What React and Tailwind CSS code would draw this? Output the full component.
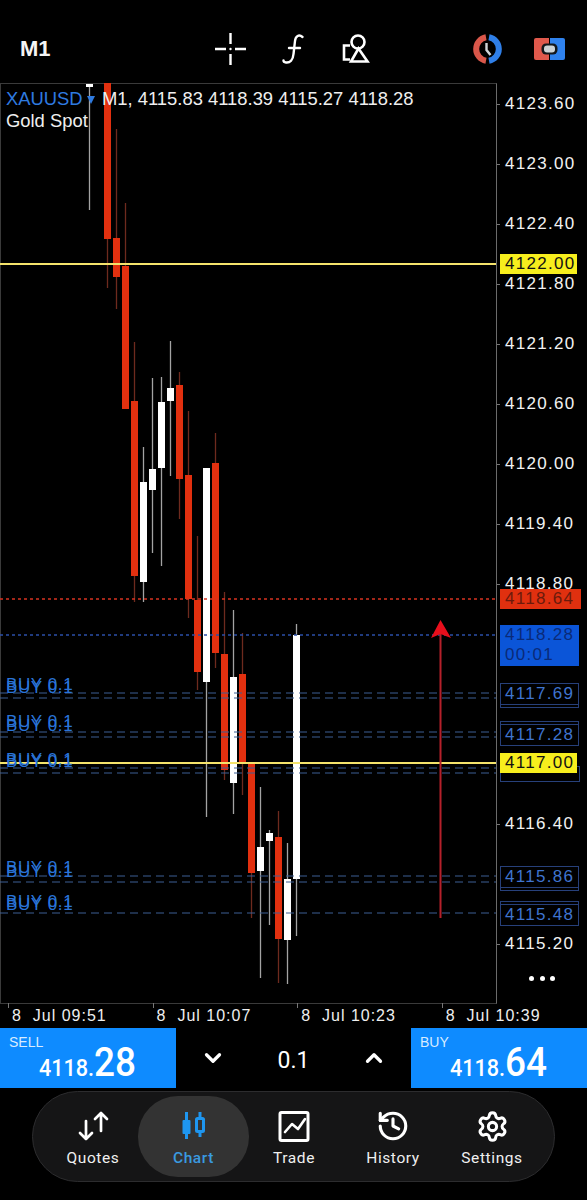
import React from 'react';
import { ChevronDown, ChevronUp, History, Settings } from 'lucide-react';

const sans = "font-['Liberation_Sans',Arial,sans-serif]";
const ui = "font-['Roboto','Liberation_Sans',sans-serif]";

// x = left of body, top/bottom = body, hi/lo = wick
const candles = [
  { x: 86, top: 84, bottom: 87, hi: 84, lo: 210, up: true },
  { x: 104, top: 83, bottom: 239, hi: 83, lo: 288 },
  { x: 113, top: 238, bottom: 277, hi: 129, lo: 309 },
  { x: 122, top: 266, bottom: 409, hi: 203, lo: 409 },
  { x: 131, top: 401, bottom: 576, hi: 342, lo: 602 },
  { x: 140, top: 482, bottom: 582, hi: 447, lo: 602, up: true },
  { x: 149, top: 469, bottom: 490, hi: 378, lo: 553, up: true },
  { x: 158, top: 402, bottom: 468, hi: 377, lo: 566, up: true },
  { x: 167, top: 388, bottom: 401, hi: 341, lo: 476, up: true },
  { x: 176, top: 385, bottom: 479, hi: 372, lo: 519 },
  { x: 185, top: 475, bottom: 599, hi: 411, lo: 618 },
  { x: 194, top: 600, bottom: 672, hi: 536, lo: 690 },
  { x: 203, top: 468, bottom: 682, hi: 468, lo: 817, up: true },
  { x: 212, top: 463, bottom: 653, hi: 433, lo: 668 },
  { x: 221, top: 654, bottom: 770, hi: 592, lo: 780 },
  { x: 230, top: 677, bottom: 783, hi: 610, lo: 814, up: true },
  { x: 239, top: 674, bottom: 763, hi: 633, lo: 795 },
  { x: 248, top: 763, bottom: 873, hi: 763, lo: 918 },
  { x: 257, top: 847, bottom: 871, hi: 787, lo: 978, up: true },
  { x: 266, top: 833, bottom: 841, hi: 830, lo: 925, up: true },
  { x: 275, top: 837, bottom: 939, hi: 811, lo: 983 },
  { x: 284, top: 879, bottom: 940, hi: 843, lo: 984, up: true },
  { x: 293, top: 635, bottom: 879, hi: 624, lo: 936, up: true },
];

const axisPrices = [
  ['4123.60', 103], ['4123.00', 163], ['4122.40', 223], ['4121.80', 283],
  ['4121.20', 343], ['4120.60', 403], ['4120.00', 463], ['4119.40', 523],
  ['4118.80', 583], ['4116.40', 823], ['4115.20', 943],
];

const buyLines = [693, 698, 732, 737, 768, 773, 876, 882, 913];
const buyLabels = [684, 687, 721, 725, 759, 761, 867, 871, 901, 904];

const orderBoxes = [
  { price: '4117.69', top: 683, shadow: 3 },
  { price: '4117.28', top: 724, shadow: -3 },
  { price: '4115.86', top: 866, shadow: 3 },
  { price: '4115.48', top: 904, shadow: -3 },
];

const timeLabels = ['8  Jul 09:51', '8  Jul 10:07', '8  Jul 10:23', '8  Jul 10:39'];

function ChartCanvas() {
  return (
    <svg className="absolute left-0 top-0" width="497" height="921" viewBox="0 83 497 921">
      {candles.map((c) => (
        <g key={c.x}>
          <line x1={c.x + 3.5} x2={c.x + 3.5} y1={c.hi} y2={c.lo} stroke={c.up ? '#a3a3a3' : '#6e2a1e'} strokeWidth="1.3" />
          <rect x={c.x} y={c.top} width="7" height={c.bottom - c.top} fill={c.up ? '#ffffff' : '#e2300f'} />
        </g>
      ))}
      {buyLines.map((y) => (
        <line key={y} x1="0" x2="496" y1={y} y2={y} stroke="#3d5f94" strokeWidth="1" strokeDasharray="8 5" />
      ))}
      <line x1="0" x2="496" y1="599" y2="599" stroke="#d83320" strokeWidth="1.3" strokeDasharray="3 3" />
      <line x1="0" x2="496" y1="635" y2="635" stroke="#2b4fa8" strokeWidth="1.3" strokeDasharray="3 3" />
      <line x1="0" x2="496" y1="264" y2="264" stroke="#f4e36b" strokeWidth="2" />
      <line x1="0" x2="496" y1="763" y2="763" stroke="#f4e36b" strokeWidth="2" />
      <line x1="440.5" x2="440.5" y1="632" y2="918" stroke="#b5202a" strokeWidth="2" />
      <path d="M440.5 620L451 638L440.5 634L431 638Z" fill="#e80f1c" />
    </svg>
  );
}

function TopIcons() {
  return (
    <div className="absolute left-0 top-0 h-[83px] w-full">
      <svg className="absolute left-[214px] top-[32px]" width="33" height="34" viewBox="0 0 33 34" fill="none" stroke="#fff" strokeWidth="2.4">
        <path d="M16.500 1v11M16.500 22v11M1 17h11M21 17h11" />
        <circle cx="16.500" cy="17" r="1.200" fill="#fff" stroke="none" />
      </svg>
      <svg className="absolute left-[281px] top-[33px]" width="24" height="32" viewBox="0 0 24 32" fill="none" stroke="#fff" strokeWidth="2.4" strokeLinecap="round">
        <path d="M21.500 4C18 1 14.500 3 14 8L12.500 21C12 27 9 30 5 29.500C3.500 29.300 2.500 28.500 2.500 27.500" />
        <path d="M8 15h11" />
      </svg>
      <svg className="absolute left-[341px] top-[33px]" width="31" height="32" viewBox="0 0 31 32" fill="none" stroke="#fff" strokeWidth="2.6">
        <circle cx="17" cy="9" r="6.500" />
        <path d="M17.500 15.500L26.500 28.500H10Z" />
        <path d="M9 12.500H3V26.500H9" />
      </svg>
      <svg className="absolute left-[472px] top-[34px]" width="31" height="30" viewBox="0 0 31 30" fill="none">
        <path d="M14 3.200A12 12 0 0 0 14 26.800" stroke="#d9574a" strokeWidth="6" />
        <path d="M17 3.200A12 12 0 0 1 17 26.800" stroke="#2f7fe8" strokeWidth="6" />
        <path d="M14.500 9V16L18.500 21" stroke="#cfd4d8" strokeWidth="2.400" />
      </svg>
      <svg className="absolute left-[534px] top-[38px]" width="31" height="22" viewBox="0 0 31 22" fill="none">
        <path d="M15 0H2A2 2 0 0 0 0 2V20A2 2 0 0 0 2 22H15Z" fill="#e0594c" />
        <path d="M16 0H29A2 2 0 0 1 31 2V20A2 2 0 0 1 29 22H16Z" fill="#2f82ee" />
        <rect x="7.500" y="5.500" width="16" height="11" rx="4.500" fill="#14181c" />
        <rect x="10" y="7.500" width="11" height="7" rx="3" fill="#cdd3d6" />
      </svg>
    </div>
  );
}

function BuyTexts() {
  return buyLabels.map((y) => (
    <div
      key={y}
      className="absolute left-[6px] text-[17px] leading-none tracking-[0.6px] text-[#2a74d8]"
      style={{ top: y - 8 }}
    >
      BUY 0.1
    </div>
  ));
}

function PriceAxis() {
  return (
    <>
      {axisPrices.map(([price, y]) => (
        <div key={price} className="absolute left-[497px] flex items-center" style={{ top: y - 9 }}>
          <span className="mr-[5px] h-px w-[3px] bg-[#777]" />
          <span className="text-[17px] leading-5 tracking-[1.3px] text-[#f2f2f2]">{price}</span>
        </div>
      ))}
      {orderBoxes.map((o) => (
        <div key={o.price}>
          <div
            className="absolute left-[500px] h-[22px] w-[79px] border border-[#27407a]"
            style={{ top: o.top + o.shadow }}
          />
          <div
            className="absolute left-[500px] h-[22px] w-[79px] border border-[#27407a] bg-black pl-[4px] text-[17px] leading-5 tracking-[1.3px] text-[#3f74cf]"
            style={{ top: o.top }}
          >
            {o.price}
          </div>
        </div>
      ))}
      <div className="absolute left-[500px] top-[766px] h-[16px] w-[80px] border border-[#27407a]" />
      <div className="absolute left-[500px] top-[254px] h-[20px] w-[77px] bg-[#f7ee1d] pl-[5px] text-[17px] leading-5 tracking-[1.3px] text-[#111]">
        4122.00
      </div>
      <div className="absolute left-[500px] top-[753px] h-[20px] w-[77px] bg-[#f7ee1d] pl-[5px] text-[17px] leading-5 tracking-[1.3px] text-[#111]">
        4117.00
      </div>
      <div className="absolute left-[500px] top-[589px] h-[20px] w-[81px] bg-[#e0300f] pl-[5px] text-[17px] leading-5 tracking-[1.3px] text-[#6b1a0c]">
        4118.64
      </div>
      <div className="absolute left-[500px] top-[625px] h-[41px] w-[79px] bg-[#0b55d8] pl-[5px] text-[17px] leading-5 tracking-[1.3px] text-[#0a2a78]">
        <div>4118.28</div>
        <div>00:01</div>
      </div>
      <div className="absolute left-[529px] top-[976px] flex gap-[5.500px]">
        <span className="size-[5px] rounded-full bg-white" />
        <span className="size-[5px] rounded-full bg-white" />
        <span className="size-[5px] rounded-full bg-white" />
      </div>
    </>
  );
}

function PriceButton({ side, small, big }) {
  return (
    <div className={`relative h-[60px] w-[176px] bg-[#0e8bff] text-white ${ui}`}>
      <div className={`absolute left-[9px] top-[6px] text-[14px] leading-4 text-[#d8ecff] ${sans}`}>{side}</div>
      <div className="absolute left-[39px] top-[9px] flex h-[46px] origin-left scale-x-90 items-end font-medium">
        <span className="text-[24px] leading-[29px]">{small}</span>
        <span className="text-[41px] leading-[42px]">{big}</span>
      </div>
    </div>
  );
}

function QuotesIcon() {
  return (
    <svg width="32" height="32" viewBox="0 0 32 32" fill="none" stroke="#fff" strokeWidth="2.7" strokeLinecap="round" strokeLinejoin="round">
      <path d="M9 11V29M3 23L9 29L15 23" />
      <path d="M24 3V21M18 9L24 3L30 9" />
    </svg>
  );
}

function ChartIcon() {
  return (
    <svg width="26" height="32" viewBox="0 0 26 32" fill="#1e96f0" stroke="#1e96f0">
      <path d="M5.500 2V29M19 2V27" strokeWidth="3" />
      <rect x="1.500" y="10" width="8" height="14" rx="1" stroke="none" />
      <rect x="15.500" y="8.500" width="7" height="13" rx="1" fill="#333" strokeWidth="3" />
    </svg>
  );
}

function TradeIcon() {
  return (
    <svg width="32" height="32" viewBox="0 0 32 32" fill="none" stroke="#fff" strokeLinejoin="round" strokeLinecap="round">
      <rect x="2" y="2.500" width="28" height="28" rx="1.500" strokeWidth="3" />
      <path d="M7 22L14 14L20 19L27 9" strokeWidth="2.600" />
    </svg>
  );
}

function NavItem({ label, active, className, children }) {
  return (
    <div className={`flex w-[90px] flex-col items-center pt-[4px] ${className || ''}`}>
      <div className="flex h-[34px] items-center justify-center">{children}</div>
      <div className={`mt-[5px] text-[15.500px] leading-5 tracking-[0.6px] ${active ? 'font-medium text-[#3a9ae0]' : 'text-[#f0f0f0]'}`}>
        {label}
      </div>
    </div>
  );
}

export default function App() {
  return (
    <div className={`relative h-[1200px] w-[587px] overflow-hidden bg-black ${sans}`}>
      <header className="flex h-[83px] items-center pl-[20px]">
        <span className="pt-[13px] text-[22px] font-bold text-[#f4f4f4]">M1</span>
      </header>
      <TopIcons />

      <main className="relative h-[945px]">
        <div className="h-[921px] w-[497px] border border-r-[#6b6b6b] border-[#3a3a3a]" />
      </main>

      {/* chart canvas, offsets below are page y */}
      <div className="absolute left-0 top-0 h-[1028px] w-[587px]">
        <div className="absolute left-0 top-[83px]">
          <ChartCanvas />
        </div>
        <div className="absolute left-[6px] top-[89px] text-[18.400px] leading-5 text-[#2f7be0]">XAUUSD</div>
        <svg className="absolute left-[87px] top-[96px]" width="8" height="8" viewBox="0 0 8 8">
          <path d="M0 0H8L4 8Z" fill="#2f7be0" />
        </svg>
        <div className="absolute left-[102px] top-[89px] text-[18.400px] leading-5 text-[#efefef]">
          M1, 4115.83 4118.39 4115.27 4118.28
        </div>
        <div className="absolute left-[6px] top-[111px] text-[18.400px] leading-5 text-[#efefef]">Gold Spot</div>
        <BuyTexts />
        <PriceAxis />
        {timeLabels.map((t, i) => (
          <div key={t} className="absolute top-[1003px]" style={{ left: 8 + i * 144.600 }}>
            <div className="h-[5px] w-px bg-[#777]" />
            <div className="absolute left-[4px] top-[3px] whitespace-pre text-[16px] leading-5 tracking-[1px] text-[#efefef]">{t}</div>
          </div>
        ))}
      </div>

      <section className="flex h-[60px] items-stretch justify-between bg-black">
        <PriceButton side="SELL" small="4118." big="28" />
        <div className={`flex w-[235px] items-center justify-between px-[24px] text-white ${ui}`}>
          <ChevronDown size={26} strokeWidth={3} />
          <span className="pt-[6px] text-[23px]">0.1</span>
          <ChevronUp size={26} strokeWidth={3} />
        </div>
        <PriceButton side="BUY" small="4118." big="64" />
      </section>

      <nav className={`mx-[32px] mt-[3px] flex h-[91px] w-[523px] items-center rounded-[46px] border border-[#2c2c2e] bg-[#151516] pl-[15px] ${ui}`}>
        <NavItem label="Quotes"><QuotesIcon /></NavItem>
        <div className="flex h-[81px] w-[111px] items-center justify-center rounded-[40px] bg-[#333333]">
          <NavItem label="Chart" active><ChartIcon /></NavItem>
        </div>
        <NavItem label="Trade"><TradeIcon /></NavItem>
        <NavItem label="History" className="ml-[9px]"><History size={34} strokeWidth={2.2} color="#fff" /></NavItem>
        <NavItem label="Settings" className="ml-[9px]"><Settings size={33} strokeWidth={2.2} color="#fff" /></NavItem>
      </nav>
    </div>
  );
}
